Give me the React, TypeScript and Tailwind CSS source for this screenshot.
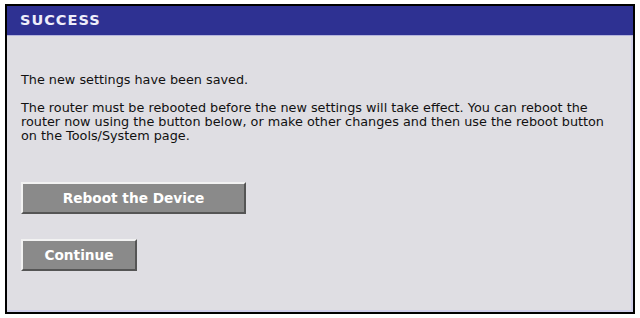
export default function App() {
  return (
    <div className="w-[640px] h-[318px] bg-white pt-[4px] pl-[5px] font-['DejaVu_Sans',sans-serif]">
      <div className="w-[630px] h-[310px] border-2 border-black flex flex-col">
        <div className="h-[29px] shrink-0 bg-[#2e3192] pl-[13px] flex items-center">
          <span className="text-[14.5px] font-bold text-[#eeeefa] tracking-[1px]">SUCCESS</span>
        </div>
        <div className="h-[1px] shrink-0 bg-[#b4b4dc]" />
        <div className="flex-1 bg-[#dfdee3] border-r-2 border-b-2 border-[#cfcde8] pl-[14px] pr-[10px] pt-[37px] text-[12.8px] leading-[14px] text-[#111] whitespace-nowrap">
          <p>The new settings have been saved.</p>
          <p className="mt-[14px]">
            The router must be rebooted before the new settings will take effect. You can reboot the
            <br />
            router now using the button below, or make other changes and then use the reboot button
            <br />
            on the Tools/System page.
          </p>
          <button className="mt-[39px] block w-[225px] h-[32px] bg-[#8a8a8a] border-2 border-t-[#f2f2f2] border-l-[#f2f2f2] border-r-[#555] border-b-[#555] text-white font-bold text-[13.7px]">
            Reboot the Device
          </button>
          <button className="mt-[25px] block w-[116px] h-[32px] bg-[#8a8a8a] border-2 border-t-[#f2f2f2] border-l-[#f2f2f2] border-r-[#555] border-b-[#555] text-white font-bold text-[13.7px]">
            Continue
          </button>
        </div>
      </div>
    </div>
  );
}
